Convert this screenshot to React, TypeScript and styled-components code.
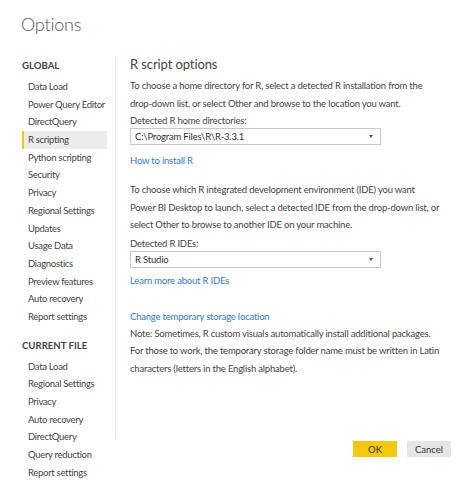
import styled, { createGlobalStyle } from 'styled-components';

const GlobalStyle = createGlobalStyle`
  html, body {
    margin: 0;
    padding: 0;
    background: #fff;
  }
  body {
    font-family: 'Segoe UI', Lato, 'Liberation Sans', sans-serif;
    color: #444;
  }
`;

const Dialog = styled.div`
  width: 474px;
  height: 480px;
  overflow: hidden;
  position: relative;
  background: #fff;
`;

const Title = styled.h1`
  margin: 0;
  padding: 12px 0 0 21px;
  height: 35px;
  font-size: 18px;
  font-weight: 300;
  letter-spacing: -0.2px;
  line-height: 24px;
  color: #555;
`;

const Body = styled.div`
  display: flex;
  padding-top: 10px;
`;

const Sidebar = styled.nav`
  flex-shrink: 0;
  width: 93px;
  padding-left: 22px;
  display: flex;
  flex-direction: column;
`;

const SectionLabel = styled.div`
  font-size: 9.6px;
  font-weight: 700;
  color: #444;
  height: 18px;
  line-height: 18px;
  margin: 0 0 3px;
`;

const NavItem = styled.div<{ $active?: boolean }>`
  height: 17.7px;
  line-height: 17.7px;
  font-size: 9.5px;
  letter-spacing: -0.3px;
  color: #444;
  width: 85px;
  padding-left: 4px;
  box-sizing: border-box;
  white-space: nowrap;
  background: ${(p) => (p.$active ? '#ececec' : 'transparent')};
  border-left: 2px solid ${(p) => (p.$active ? '#f2c811' : 'transparent')};
`;

const Group = styled.div`
  margin-bottom: 11px;
`;

const Divider = styled.div`
  flex-shrink: 0;
  width: 1px;
  height: 380px;
  background: #ececec;
  margin-right: 14px;
`;

const Content = styled.div`
  flex: 1;
  min-width: 0;
  margin-top: -3px;
  font-size: 9.5px;
  letter-spacing: -0.2px;
  color: #444;
`;

const Heading = styled.h2`
  margin: 0 0 3px;
  font-size: 13px;
  font-weight: 400;
  letter-spacing: -0.1px;
  color: #444;
  line-height: 20px;
`;

const Para = styled.p<{ $gap?: number }>`
  margin: 0 0 ${(p) => p.$gap ?? 0}px;
  line-height: 17.5px;
  white-space: nowrap;
`;

const FieldLabel = styled.div`
  line-height: 15px;
  margin-top: 2px;
`;

const Select = styled.div`
  width: 251px;
  height: 17px;
  border: 1px solid #c8c8c8;
  box-sizing: border-box;
  display: flex;
  align-items: center;
  justify-content: space-between;
  padding: 0 7px 0 4px;
  color: #333;
`;

const Caret = styled.span`
  width: 0;
  height: 0;
  border-left: 2px solid transparent;
  border-right: 2px solid transparent;
  border-top: 3px solid #555;
`;

const LinkText = styled.a<{ $mt?: number; $mb?: number }>`
  display: block;
  color: #2f7bd0;
  text-decoration: none;
  line-height: 17px;
  margin-top: ${(p) => p.$mt ?? 0}px;
  margin-bottom: ${(p) => p.$mb ?? 0}px;
`;

const Footer = styled.div`
  position: absolute;
  right: 23px;
  bottom: 23px;
  display: flex;
  gap: 10px;
`;

const Button = styled.button<{ $primary?: boolean }>`
  width: 44px;
  height: 16px;
  padding: 0;
  border: none;
  font-family: inherit;
  font-size: 9.5px;
  color: #333;
  background: ${(p) => (p.$primary ? '#f2c811' : '#e6e6e6')};
`;

const globalItems = [
  'Data Load',
  'Power Query Editor',
  'DirectQuery',
  'R scripting',
  'Python scripting',
  'Security',
  'Privacy',
  'Regional Settings',
  'Updates',
  'Usage Data',
  'Diagnostics',
  'Preview features',
  'Auto recovery',
  'Report settings',
];

const fileItems = [
  'Data Load',
  'Regional Settings',
  'Privacy',
  'Auto recovery',
  'DirectQuery',
  'Query reduction',
  'Report settings',
];

export default function App() {
  return (
    <Dialog>
      <GlobalStyle />
      <Title>Options</Title>
      <Body>
        <Sidebar>
          <Group>
            <SectionLabel>GLOBAL</SectionLabel>
            {globalItems.map((item) => (
              <NavItem key={item} $active={item === 'R scripting'}>
                {item}
              </NavItem>
            ))}
          </Group>
          <Group>
            <SectionLabel>CURRENT FILE</SectionLabel>
            {fileItems.map((item) => (
              <NavItem key={item}>{item}</NavItem>
            ))}
          </Group>
        </Sidebar>
        <Divider />
        <Content>
          <Heading>R script options</Heading>
          <Para $gap={-1}>
            To choose a home directory for R, select a detected R installation from the
            <br />
            drop-down list, or select Other and browse to the location you want.
          </Para>
          <FieldLabel>Detected R home directories:</FieldLabel>
          <Select>
            <span>C:\Program Files\R\R-3.3.1</span>
            <Caret />
          </Select>
          <LinkText $mt={7} $mb={12}>How to install R</LinkText>
          <Para>
            To choose which R integrated development environment (IDE) you want
            <br />
            Power BI Desktop to launch, select a detected IDE from the drop-down list, or
            <br />
            select Other to browse to another IDE on your machine.
          </Para>
          <FieldLabel>Detected R IDEs:</FieldLabel>
          <Select>
            <span>R Studio</span>
            <Caret />
          </Select>
          <LinkText $mt={4} $mb={19}>Learn more about R IDEs</LinkText>
          <LinkText>Change temporary storage location</LinkText>
          <Para>
            Note: Sometimes, R custom visuals automatically install additional packages.
            <br />
            For those to work, the temporary storage folder name must be written in Latin
            <br />
            characters (letters in the English alphabet).
          </Para>
        </Content>
      </Body>
      <Footer>
        <Button $primary>OK</Button>
        <Button>Cancel</Button>
      </Footer>
    </Dialog>
  );
}
